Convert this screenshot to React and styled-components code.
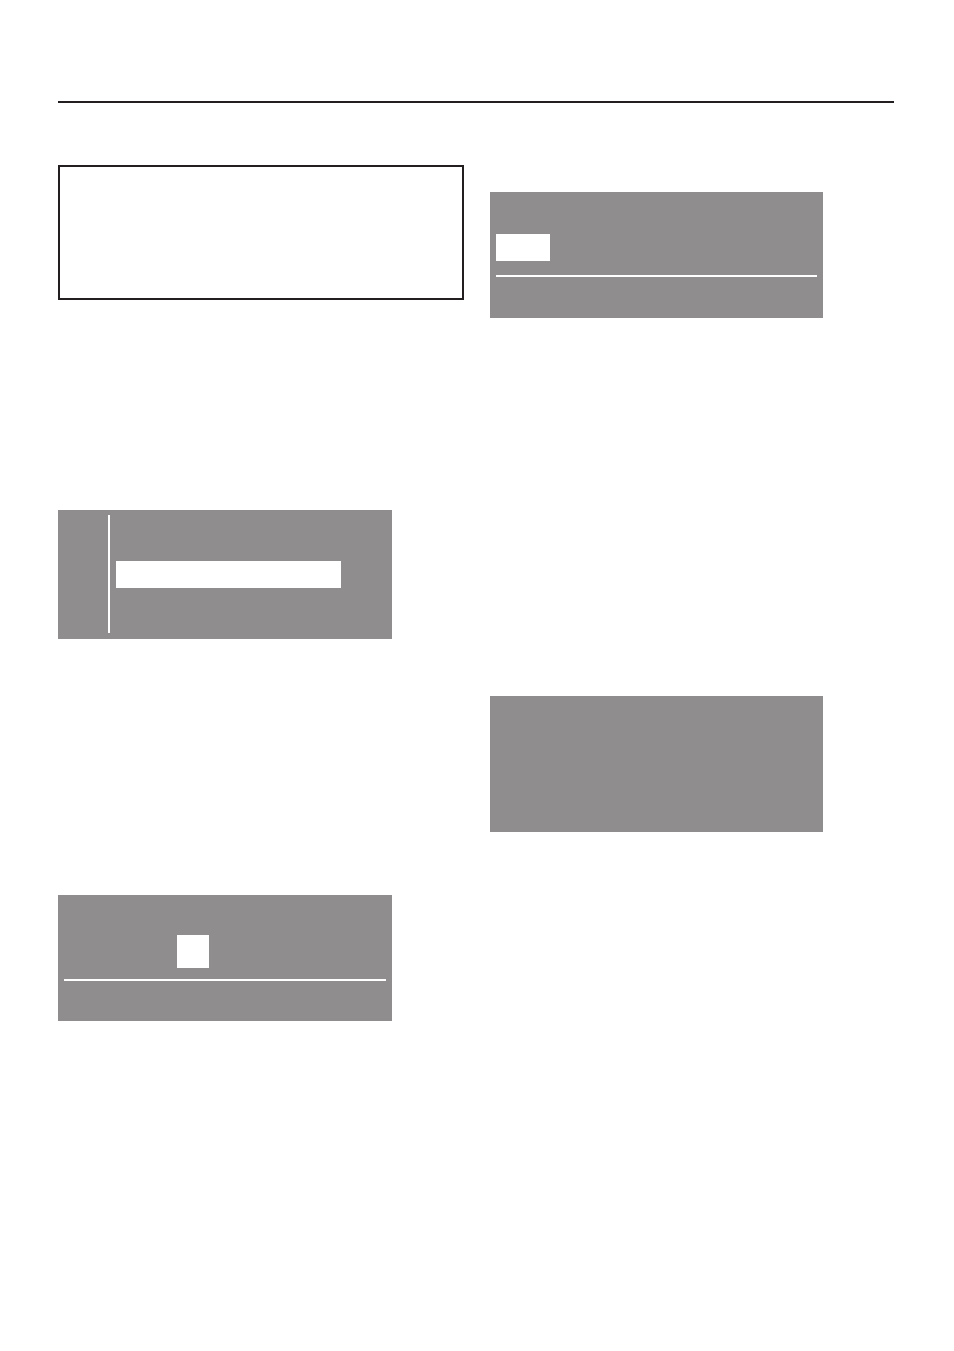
import React from "react";
import styled, { createGlobalStyle } from "styled-components";

const GRAY = "#8f8d8e";
const INK = "#231f20";

const Global = createGlobalStyle`
    html, body { margin: 0; padding: 0; background: #fff; }
    body { font-family: "Liberation Sans", Arial, sans-serif; }
`;

const Page = styled.div`
    width: 954px;
    min-height: 1351px;
    padding: 101px 0 0 58px;
    box-sizing: border-box;
`;

const HeadRule = styled.div`
    width: 836px;
    height: 2px;
    background: ${INK};
`;

const Columns = styled.div`
    display: grid;
    grid-template-columns: 406px 404px;
    column-gap: 26px;
    align-items: start;
`;

const Column = styled.div`
    display: flex;
    flex-direction: column;
    align-items: flex-start;
`;

const NoteBox = styled.div`
    width: 406px;
    height: 135px;
    box-sizing: border-box;
    border: 2px solid ${INK};
    margin-top: ${(p) => p.$top}px;
`;

const Display = styled.div`
    width: ${(p) => p.$w}px;
    height: ${(p) => p.$h}px;
    margin-top: ${(p) => p.$top}px;
    background: ${GRAY};
    box-sizing: border-box;
    display: flex;
    flex-direction: ${(p) => (p.$row ? "row" : "column")};
    align-items: flex-start;
    padding: ${(p) => p.$pad || "0"};
`;

const Chip = styled.div`
    width: ${(p) => p.$w}px;
    height: ${(p) => p.$h}px;
    margin-left: ${(p) => p.$left || 0}px;
    background: #fff;
    flex-shrink: 0;
`;

const Line = styled.div`
    align-self: stretch;
    height: 2px;
    margin-top: ${(p) => p.$top}px;
    background: #fff;
`;

const VLine = styled.div`
    align-self: stretch;
    width: 2px;
    background: #fff;
`;

const MenuList = styled.div`
    padding: 46px 0 0 6px;
`;

export default function App() {
    return (
        <>
            <Global />
            <Page>
                <HeadRule />
                <Columns>
                    <Column>
                        <NoteBox $top={62} />
                        <Display $w={334} $h={129} $top={210} $row $pad="5px 0 6px 50px">
                            <VLine />
                            <MenuList>
                                <Chip $w={225} $h={27} />
                            </MenuList>
                        </Display>
                        <Display $w={334} $h={126} $top={256} $pad="40px 6px 0">
                            <Chip $w={32} $h={33} $left={113} />
                            <Line $top={11} />
                        </Display>
                    </Column>
                    <Column>
                        <Display $w={333} $h={126} $top={89} $pad="42px 6px 0">
                            <Chip $w={54} $h={27} />
                            <Line $top={14} />
                        </Display>
                        <Display $w={333} $h={136} $top={378} />
                    </Column>
                </Columns>
            </Page>
        </>
    );
}
